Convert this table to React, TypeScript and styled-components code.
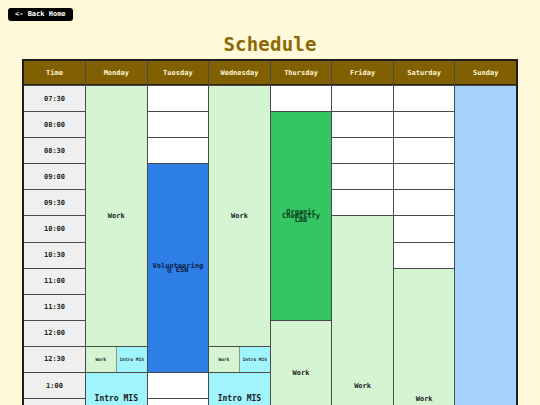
import React from "react";
import styled, { createGlobalStyle } from "styled-components";

const Global = createGlobalStyle`
  html, body { margin: 0; padding: 0; background: #fff8d9; }
  body { font-family: "DejaVu Sans Mono", "Liberation Mono", monospace; }
`;

const Page = styled.div`
  padding: 8px 22px 20px 8px;
  box-sizing: border-box;
  width: 540px;
`;

const BackButton = styled.button`
  display: block;
  height: 13px;
  padding: 0 7px;
  border: none;
  border-radius: 3px;
  background: #000;
  color: #fff;
  font-family: "DejaVu Sans Mono", monospace;
  font-weight: bold;
  font-size: 7px;
  line-height: 13px;
  cursor: pointer;
`;

const Title = styled.h1`
  margin: 13px 0 5px 14px;
  text-align: center;
  font-family: "DejaVu Sans Mono", monospace;
  font-weight: bold;
  font-size: 19px;
  line-height: 20px;
  color: #8a6a06;
  letter-spacing: 0.2px;
`;

const Grid = styled.div`
  margin-left: 14px;
  width: 496px;
  box-sizing: border-box;
  display: grid;
  grid-template-columns: 61px repeat(7, 1fr);
  grid-template-rows: 24px repeat(20, 25.1px);
  gap: 1px;
  background: #4a4a4a;
  border: 2px solid #1e1e1e;
`;

const Head = styled.div`
  background: #806000;
  color: #fff4d8;
  font-weight: bold;
  font-size: 7px;
  display: flex;
  align-items: center;
  justify-content: center;
  border-bottom: 1px solid #2e2410;
`;

const TimeCell = styled.div<{ $row: number }>`
  grid-column: 1;
  grid-row: ${(p) => p.$row + 2};
  background: #efefef;
  color: #222;
  font-weight: bold;
  font-size: 7px;
  display: flex;
  align-items: center;
  justify-content: center;
`;

const Slot = styled.div<{ $col: number; $row: number; $span: number; $bg: string; $fg: string; $size: number }>`
  grid-column: ${(p) => p.$col + 2};
  grid-row: ${(p) => p.$row + 2} / span ${(p) => p.$span};
  background: ${(p) => p.$bg};
  color: ${(p) => p.$fg};
  font-weight: bold;
  font-size: ${(p) => p.$size}px;
  line-height: ${(p) => (p.$size > 7 ? 9 : 4)}px;
  display: flex;
  align-items: center;
  justify-content: center;
  text-align: center;
  padding: 0 5px;
  overflow: hidden;
`;

const Split = styled.div<{ $col: number; $row: number }>`
  grid-column: ${(p) => p.$col + 2};
  grid-row: ${(p) => p.$row + 2};
  display: flex;
  gap: 1px;
  background: #8a9a8a;
`;

const Half = styled.div<{ $bg: string }>`
  flex: 1;
  background: ${(p) => p.$bg};
  color: #222;
  font-weight: bold;
  font-size: 4.5px;
  display: flex;
  align-items: center;
  justify-content: center;
`;

const times = [
  "07:30", "08:00", "08:30", "09:00", "09:30", "10:00", "10:30", "11:00", "11:30", "12:00",
  "12:30", "1:00", "1:30", "2:00", "2:30", "3:00", "3:30", "4:00", "4:30", "5:00",
];
const days = ["Monday", "Tuesday", "Wednesday", "Thursday", "Friday", "Saturday", "Sunday"];

const WORK = "#d4f4d2";
const MIS = "#a0f4fb";

type Ev = { row: number; span: number; label?: string; bg: string; fg?: string; size?: number; split?: boolean };

const schedule: Ev[][] = [
  [
    { row: 0, span: 10, label: "Work", bg: WORK },
    { row: 10, span: 1, bg: WORK, split: true },
    { row: 11, span: 2, label: "Intro MIS", bg: MIS, size: 8 },
  ],
  [{ row: 3, span: 8, label: "Volunteering @ ESW", bg: "#2e7ee8", fg: "#0c1c3c" }],
  [
    { row: 0, span: 10, label: "Work", bg: WORK },
    { row: 10, span: 1, bg: WORK, split: true },
    { row: 11, span: 2, label: "Intro MIS", bg: MIS, size: 8 },
  ],
  [
    { row: 1, span: 8, label: "Organic Chemistry Lab", bg: "#35c563", fg: "#0c3a1c" },
    { row: 9, span: 4, label: "Work", bg: WORK },
  ],
  [{ row: 5, span: 13, label: "Work", bg: WORK }],
  [{ row: 7, span: 10, label: "Work", bg: WORK }],
  [{ row: 0, span: 20, bg: "#a6d3fc" }],
];

export default function App() {
  const cells: React.ReactNode[] = [];
  schedule.forEach((evs, col) => {
    const taken = new Array(times.length).fill(false);
    evs.forEach((ev, i) => {
      for (let r = ev.row; r < ev.row + ev.span && r < times.length; r++) taken[r] = true;
      if (ev.split) {
        cells.push(
          <Split key={`e${col}-${i}`} $col={col} $row={ev.row}>
            <Half $bg={WORK}>Work</Half>
            <Half $bg={MIS}>Intro MIS</Half>
          </Split>
        );
      } else {
        cells.push(
          <Slot
            key={`e${col}-${i}`}
            $col={col}
            $row={ev.row}
            $span={ev.span}
            $bg={ev.bg}
            $fg={ev.fg ?? "#1a1a1a"}
            $size={ev.size ?? 7}
          >
            {ev.label}
          </Slot>
        );
      }
    });
    taken.forEach((t, r) => {
      if (!t)
        cells.push(
          <Slot key={`x${col}-${r}`} $col={col} $row={r} $span={1} $bg="#ffffff" $fg="#000" $size={7} />
        );
    });
  });

  return (
    <Page>
      <Global />
      <BackButton>{"<- Back Home"}</BackButton>
      <Title>Schedule</Title>
      <Grid>
        <Head>Time</Head>
        {days.map((d) => (
          <Head key={d}>{d}</Head>
        ))}
        {times.map((t, i) => (
          <TimeCell key={t} $row={i}>
            {t}
          </TimeCell>
        ))}
        {cells}
      </Grid>
    </Page>
  );
}
